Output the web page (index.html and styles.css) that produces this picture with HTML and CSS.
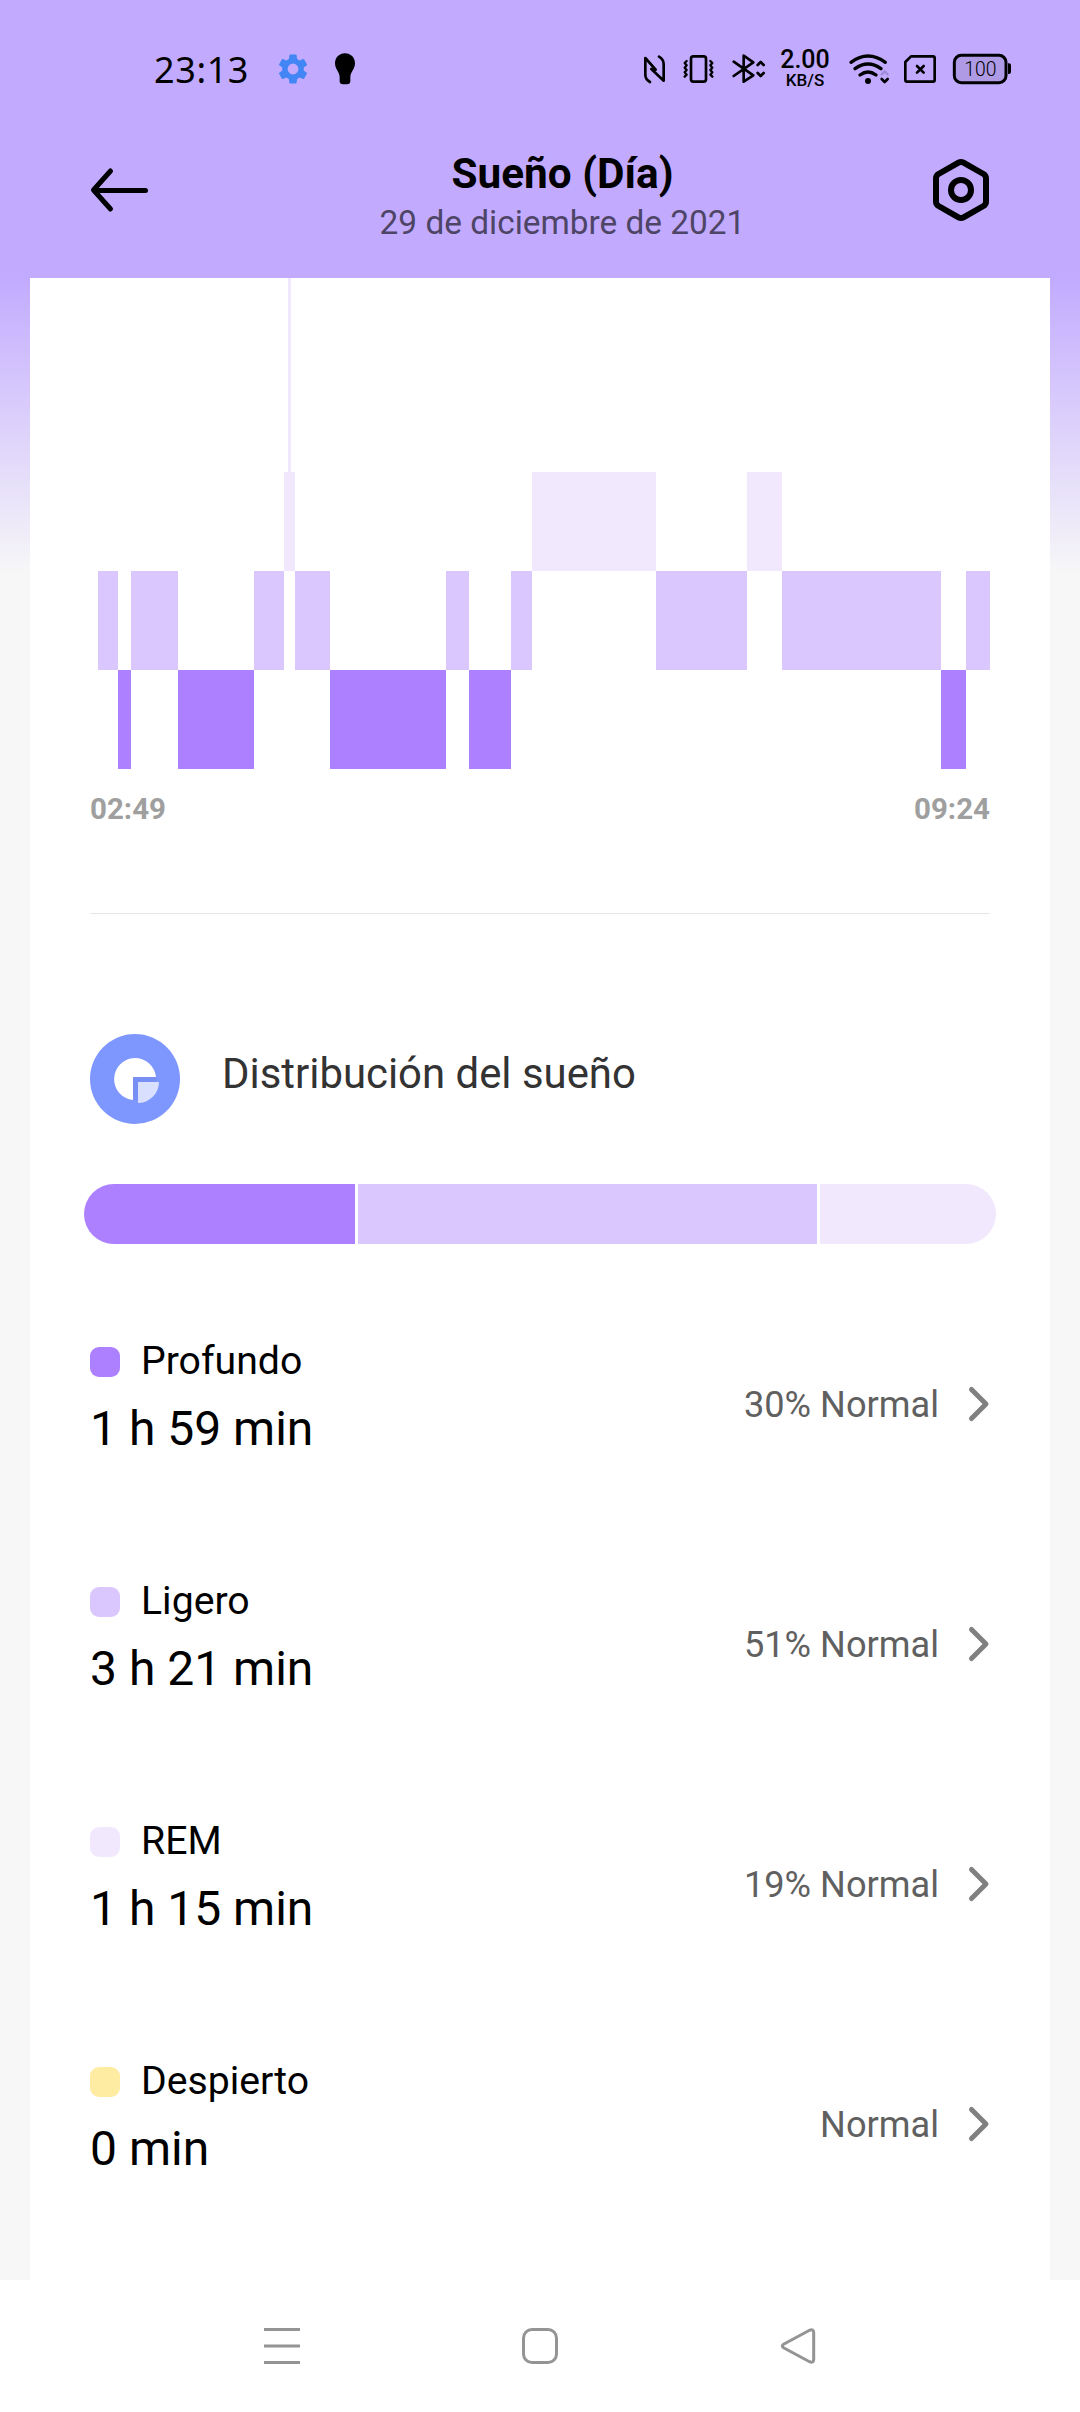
FILE: index.html
```html
<!DOCTYPE html>
<html lang="es">
<head>
<meta charset="utf-8">
<title>Sueño (Día)</title>
<link rel="stylesheet" href="styles.css">
</head>
<body>
<div class="screen">
  <header class="header">
    <div class="status">
      <span class="clock">23:13</span>
      <svg class="ic-gear" width="36" height="36" viewBox="0 0 24 24"><path d="M19.14 12.94c.04-.3.06-.61.06-.94 0-.32-.02-.64-.07-.94l2.03-1.58a.49.49 0 0 0 .12-.61l-1.92-3.32a.49.49 0 0 0-.59-.22l-2.39.96c-.5-.38-1.03-.7-1.62-.94l-.36-2.54a.48.48 0 0 0-.48-.41h-3.84a.47.47 0 0 0-.47.41l-.36 2.54c-.59.24-1.13.57-1.62.94l-2.39-.96a.48.48 0 0 0-.59.22L2.74 8.87a.48.48 0 0 0 .12.61l2.03 1.58c-.05.3-.09.63-.09.94s.02.64.07.94l-2.03 1.58a.49.49 0 0 0-.12.61l1.92 3.32c.12.22.37.29.59.22l2.39-.96c.5.38 1.03.7 1.62.94l.36 2.54c.05.24.24.41.48.41h3.84c.24 0 .44-.17.47-.41l.36-2.54c.59-.24 1.13-.56 1.62-.94l2.39.96c.22.08.47 0 .59-.22l1.92-3.32a.48.48 0 0 0-.12-.61zM12 15.6A3.6 3.6 0 1 1 12 8.4a3.6 3.6 0 0 1 0 7.200z"/></svg>
      <svg class="ic-bulb" width="20" height="32" viewBox="0 0 60 96"><path d="M30 1C47 1 60 14 60 31C60 48 47 56 46 72V85Q46 94 36 94H24Q14 94 14 85V72C13 56 0 48 0 31C0 14 13 1 30 1Z"/></svg>
      <div class="status-right">
        <svg width="24" height="32" viewBox="69 69 72 96" class="line"><path stroke-width="8" d="M90 156Q76 148 76 135V84L107 119M117 80Q131 88 131 102V152L94 117"/></svg>
        <svg class="ic-vibrate" width="34" height="32" viewBox="186 69 102 96"><g class="line"><rect x="213" y="79" width="45" height="76" rx="7" stroke-width="8"/><path stroke-width="7" d="M200 93L194 99L200 106L194 113L200 120L194 127L200 134L194 140M271 93L277 99L271 106L277 113L271 120L277 127L271 134L277 140"/></g></svg>
        <svg class="ic-bt" width="34" height="32" viewBox="336 69 102 96"><g class="line" stroke-width="8"><path d="M341 95L400 136L371 155V77L400 97L341 138"/><path d="M413 105L422 96L431 105M413 129L422 138L431 129"/></g></svg>
        <div class="speed"><span class="speed-num">2.00</span><span class="speed-unit">KB/S</span></div>
        <svg class="ic-wifi" width="40" height="32" viewBox="687 69 120 96"><g class="line"><path stroke-width="10" d="M693 97Q744 59 796 97M705 116Q744 88 783 116M720 135Q744 117 768 135"/><path stroke-width="7" class="dim" d="M785 133L794 124L803 133"/><path stroke-width="8" d="M785 147L794 156L803 147"/></g><circle cx="744" cy="153" r="9"/></svg>
        <svg class="ic-sim" width="32" height="32" viewBox="852 69 96 96"><g class="line" stroke-width="8"><path d="M873 79H939Q944 79 944 84V150Q944 155 939 155H861Q856 155 856 150V96Z"/><path d="M891 108L911 128M911 108L891 128"/></g></svg>
        <svg class="ic-battery" width="60" height="32" viewBox="996 69 180 96"><rect x="1003" y="76" width="155" height="82" rx="21" class="battery"/><path d="M1164 100H1167Q1173 100 1173 106V126Q1173 132 1167 132H1164Z"/><text x="1081" y="138" text-anchor="middle" class="battery-text">100</text></svg>
      </div>
    </div>
    <div class="titlebar">
      <svg width="58" height="42" viewBox="0 0 58 42"><path class="line" stroke-width="5" d="M20.500 2L3.500 21L20.500 40M4 21.500H55.500" /></svg>
      <div class="titles">
        <h1 class="title">Sueño (Día)</h1>
        <div class="date">29 de diciembre de 2021</div>
      </div>
      <svg width="58" height="64" viewBox="0 0 58 64"><g class="line" stroke-width="6"><path d="M26.500 4.700Q29 3.300 31.500 4.700L51.500 16Q54 17.500 54 20.500V43.500Q54 46.500 51.500 48L31.500 59.300Q29 60.700 26.500 59.300L6.500 48Q4 46.500 4 43.500V20.500Q4 17.500 6.500 16Z"/><circle cx="29" cy="32" r="10"/></g></svg>
    </div>
  </header>

  <main class="content">
    <section class="card">
      <div class="chart">
        <i class="seg light" style="width:20px"></i><i class="seg deep" style="width:13px"></i><i class="seg light" style="width:47px"></i><i class="seg deep" style="width:76px"></i><i class="seg light" style="width:30px"></i><i class="seg rem spike" style="width:11px"></i><i class="seg light" style="width:35px"></i><i class="seg deep" style="width:116px"></i><i class="seg light" style="width:23px"></i><i class="seg deep" style="width:42px"></i><i class="seg light" style="width:21px"></i><i class="seg rem" style="width:124px"></i><i class="seg light" style="width:91px"></i><i class="seg rem" style="width:35px"></i><i class="seg light" style="width:159px"></i><i class="seg deep" style="width:25px"></i><i class="seg light" style="width:24px"></i>
      </div>
      <div class="times"><span>02:49</span><span>09:24</span></div>
      <div class="section-head">
        <svg width="90" height="90" viewBox="0 0 90 90"><circle cx="45" cy="45" r="45" fill="#7e97fe"/><path fill="#7890f4" d="M43 43H66V48H48V66H43Z"/><path fill="#fff" d="M43 66A21 21 0 1 1 66 43H43Z"/><path fill="#d8dfff" d="M48 48H69A21 21 0 0 1 48 69Z"/></svg>
        <h2 class="section-title">Distribución del sueño</h2>
      </div>
      <div class="bar"><i class="deep" style="width:271px"></i><i class="light" style="width:459px"></i><i class="rem"></i></div>
      <ul class="stages">
        <li class="stage">
          <div><div class="name"><i class="swatch deep"></i>Profundo</div><div class="duration">1 h 59 min</div></div>
          <div class="result"><span>30% Normal</span><svg width="22" height="38" viewBox="0 0 22 38"><path class="chev" d="M3.500 4.500L18 19L3.500 33.500"/></svg></div>
        </li>
        <li class="stage">
          <div><div class="name"><i class="swatch light"></i>Ligero</div><div class="duration">3 h 21 min</div></div>
          <div class="result"><span>51% Normal</span><svg width="22" height="38" viewBox="0 0 22 38"><path class="chev" d="M3.500 4.500L18 19L3.500 33.500"/></svg></div>
        </li>
        <li class="stage">
          <div><div class="name"><i class="swatch rem"></i>REM</div><div class="duration">1 h 15 min</div></div>
          <div class="result"><span>19% Normal</span><svg width="22" height="38" viewBox="0 0 22 38"><path class="chev" d="M3.500 4.500L18 19L3.500 33.500"/></svg></div>
        </li>
        <li class="stage">
          <div><div class="name"><i class="swatch awake"></i>Despierto</div><div class="duration">0 min</div></div>
          <div class="result"><span>Normal</span><svg width="22" height="38" viewBox="0 0 22 38"><path class="chev" d="M3.500 4.500L18 19L3.500 33.500"/></svg></div>
        </li>
      </ul>
    </section>
  </main>

  <nav class="nav">
    <svg width="36" height="36" viewBox="0 0 36 36"><path d="M0 1.500H36M0 18H36M0 34.500H36"/></svg>
    <svg width="36" height="36" viewBox="0 0 36 36"><rect x="1.500" y="1.500" width="33" height="33" rx="8.500"/></svg>
    <svg width="36" height="36" viewBox="0 0 36 36"><path d="M29.500 2.300L3.600 16.200Q1 18 3.600 19.800L29.500 33.700Q33.700 35.200 33.700 31.500V4.500Q33.700 .8 29.500 2.300Z"/></svg>
  </nav>
</div>
</body>
</html>
```
FILE: styles.css
```css
* { box-sizing: border-box; }
body { margin: 0; font-family: Roboto, sans-serif; color: #000; }
h1, h2, ul { margin: 0; padding: 0; list-style: none; font-weight: 400; }
svg { display: block; flex: none; overflow: visible; }
i { display: block; }

.screen { width: 1080px; height: 2412px; display: flex; flex-direction: column; background: #fff; }

.line { fill: none; stroke: #000; stroke-linecap: round; stroke-linejoin: round; }
.deep { background: #ad80ff; }
.light { background: #d9c7fe; }
.rem { background: #f1e8fe; }
.awake { background: #ffeca3; }

/* Header */
.header { height: 278px; flex: none; background: #c2abff; }
.status { height: 138px; padding: 0 68px 0 154px; display: flex; align-items: center; }
.clock { font: 36px/1 "Noto Sans", sans-serif; width: 120px; letter-spacing: .6px; padding-top: 2px; }
.ic-gear { fill: #4285f4; margin-left: 1px; }
.ic-bulb { margin-left: 24px; }
.status-right { display: flex; align-items: center; margin-left: auto; }
.ic-vibrate { margin-left: 15px; }
.ic-bt { margin-left: 16px; }
.speed { width: 54px; margin-left: 12px; display: flex; flex-direction: column; align-items: center; font-weight: 500; }
.speed-num { font-size: 25px; line-height: 22px; }
.speed-unit { font-size: 17px; line-height: 18px; }
.ic-wifi { margin-left: 17px; }
.ic-wifi .dim { stroke: #a18cdc; }
.ic-sim { margin-left: 15px; }
.ic-battery { margin-left: 16px; }
.battery { fill: #ae9ae5; stroke: #000; stroke-width: 9; }
.battery-text { font: 300 58px Roboto, sans-serif; }

.titlebar { padding: 0 90px; display: grid; grid-template: 104px / 103px 1fr 58px; align-items: center; }
.titles { text-align: center; padding-top: 15px; }
.title { font-size: 42.3px; line-height: 50px; font-weight: 700; }
.date { font-size: 33.4px; line-height: 48px; color: #4e4566; }

/* Card */
.content { height: 2002px; flex: none; padding: 0 30px; background: linear-gradient(#c2abff, #f7f7f7 297px); }
.card { height: 100%; padding: 0 60px; background: #fff; }
.chart { height: 491px; padding-left: 8px; display: flex; align-items: flex-end; }
.seg { height: 99px; flex: none; }
.seg.light { margin-bottom: 99px; }
.seg.rem { margin-bottom: 198px; }
.spike { position: relative; }
.spike::before { content: ""; position: absolute; left: 4px; bottom: 99px; width: 3px; height: 194px; background: #f1e8fe; }
.times { height: 145px; padding-top: 22px; display: flex; justify-content: space-between; border-bottom: 1px solid #e6e6e6; font-size: 29.5px; line-height: 36px; font-weight: 700; color: #9f9f9f; }

.section-head { margin-top: 120px; display: flex; align-items: center; gap: 42px; }
.section-title { font-size: 41.9px; line-height: 50px; padding-bottom: 10px; color: #333; }
.bar { height: 60px; margin: 60px -6px 0; display: flex; gap: 3px; border-radius: 30px; overflow: hidden; }
.bar i:last-child { flex: 1; }

.stages { padding-top: 95px; }
.stage { height: 240px; display: flex; justify-content: space-between; }
.name { display: flex; align-items: center; gap: 21px; font-size: 39.2px; line-height: 44px; }
.swatch { width: 30px; height: 30px; border-radius: 9px; margin-top: 2px; }
.duration { margin-top: 18px; font-size: 48px; line-height: 56px; }
.result { height: 44px; margin-top: 43px; display: flex; align-items: center; gap: 29px; font-size: 36.2px; line-height: 44px; color: #606060; }
.result span { padding-top: 2px; }
.chev { fill: none; stroke: #808080; stroke-width: 5; stroke-linecap: round; stroke-linejoin: round; }

/* Navigation */
.nav { flex: 1; display: flex; justify-content: space-between; padding: 48px 264px 0; }
.nav svg { fill: none; stroke: #949494; stroke-width: 3; }
```
